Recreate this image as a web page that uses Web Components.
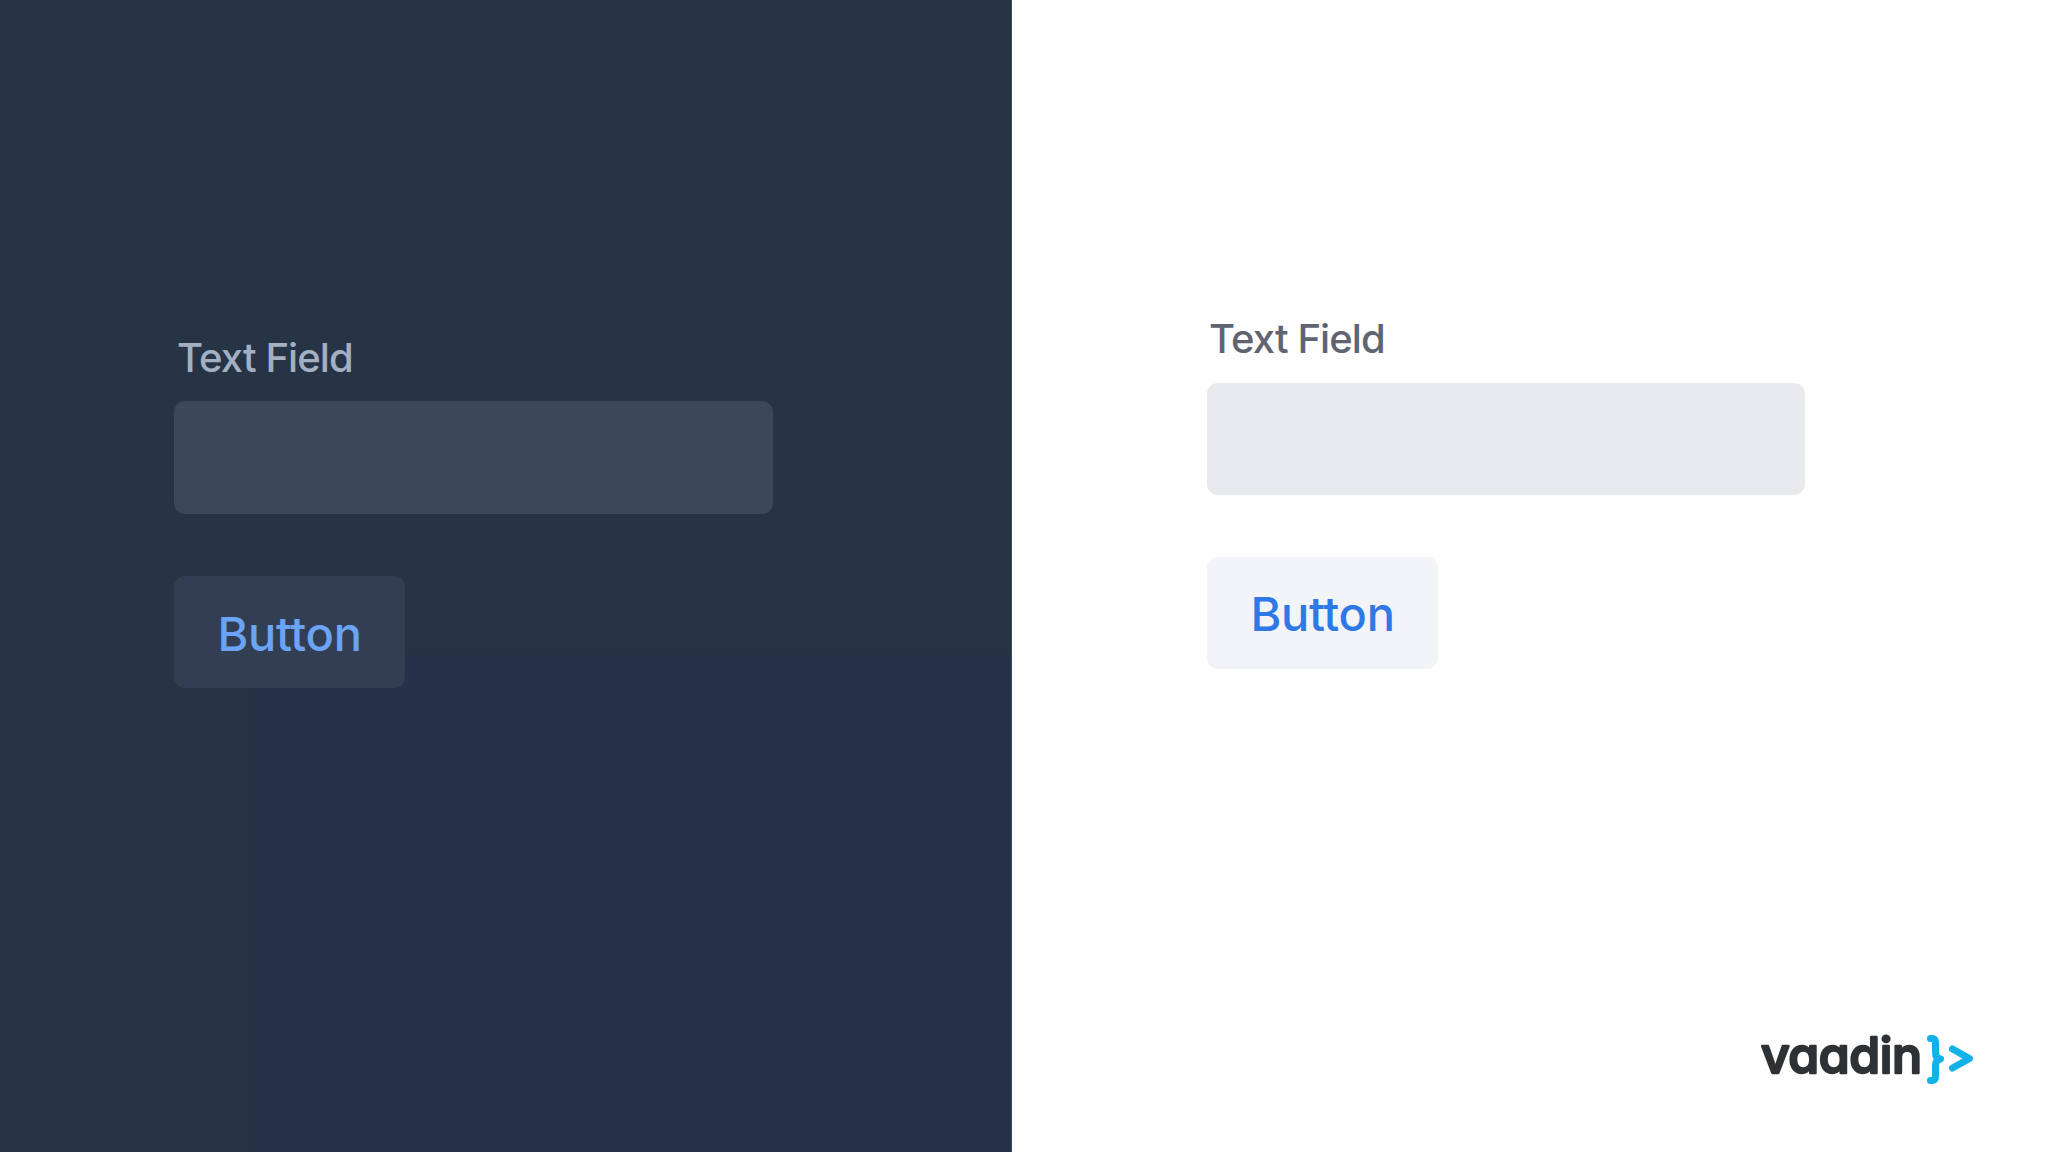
<!DOCTYPE html>
<html lang="en"><head><meta charset="utf-8"><title>Vaadin</title>
<style>
html,body{margin:0;padding:0;width:2048px;height:1152px;overflow:hidden;font-family:Inter,"Liberation Sans",sans-serif}
demo-stage{width:2048px;height:1152px}
</style></head><body>
<template id="t-stage"><style>:host{display:grid;grid-template-columns:1012px 1036px}</style><slot></slot></template>
<template id="t-panel"><style>
:host{display:flex;flex-direction:column;box-sizing:border-box;height:1152px;padding-left:174px;background:var(--bg);padding-top:var(--top)}
:host([theme=dark]){--bg:linear-gradient(#263445 0,#263445 652px,transparent 662px),linear-gradient(to right,#263446 0,#263446 253px,transparent 258px),#26314a;--label:#a3b0c4;--field:#3b4858;--btn:#323f52;--accent:#6ba4f7;--top:335px;--gap:20px;--h:113px;--w:599px;--lx:3px;--bp:3px;border-right:1px solid #3c4a5c}
:host([theme=light]){--bg:#fefefe;--label:#5f6471;--field:#e9eaee;--btn:#f3f4f8;--accent:#2f79e6;--top:316px;--gap:21px;--h:112px;--w:598px;--lx:2px;--bp:1px;padding-left:195px}
</style><slot></slot></template>
<template id="t-field"><style>
:host{display:block;width:var(--w)}
.label{display:block;margin:0 0 0 var(--lx);font:500 40px/46px Inter,"Liberation Sans",sans-serif;letter-spacing:-.9px;color:var(--label);height:46px}
.box{height:var(--h);margin-top:var(--gap);border-radius:11px;background:var(--field)}
</style><span class="label"><slot></slot></span><div class="box"></div></template>
<template id="t-btn"><style>
:host{display:inline-flex;align-self:flex-start;align-items:center;justify-content:center;box-sizing:border-box;width:231px;height:112px;padding-top:var(--bp);margin-top:62px;border-radius:11px;background:var(--btn);color:var(--accent);font:500 47px/1 Inter,"Liberation Sans",sans-serif;letter-spacing:-.3px}
</style><slot></slot></template>
<template id="t-logo"><style>
:host{display:block;align-self:flex-end;margin-top:auto;margin-right:68px;margin-bottom:57px;width:225px;height:70px}
svg{display:block}
text{font:500 50px Inter,"Liberation Sans",sans-serif;font-feature-settings:"cv11";fill:#2f3235;stroke:#2f3235;stroke-width:2.4px;stroke-linejoin:round}
</style><svg width="225" height="70" viewBox="0 0 225 70" role="img" aria-label="vaadin"><text x="6" y="48" textLength="161" lengthAdjust="spacing">vaadin</text>
<path d="M175.500 13.500H177q3.500 0 3.500 4V28q0 5 5 6q-5 1-5 6V51q0 4.500-3.500 4.500H175.500" fill="none" stroke="#13b1e8" stroke-width="7" stroke-linecap="round" stroke-linejoin="round"/>
<path d="M197.500 24L214.500 33.500L197.500 43" fill="none" stroke="#13b1e8" stroke-width="7" stroke-linecap="round" stroke-linejoin="round"/></svg></template>
<demo-stage>
<demo-panel theme="dark"><demo-field>Text Field</demo-field><demo-button>Button</demo-button></demo-panel>
<demo-panel theme="light"><demo-field>Text Field</demo-field><demo-button>Button</demo-button><vaadin-logo></vaadin-logo></demo-panel>
</demo-stage>
<script>
for(const [n,t] of [['demo-stage','t-stage'],['demo-panel','t-panel'],['demo-field','t-field'],['demo-button','t-btn'],['vaadin-logo','t-logo']]){
customElements.define(n,class extends HTMLElement{constructor(){super();this.attachShadow({mode:'open'}).appendChild(document.getElementById(t).content.cloneNode(true))}});
}
</script>
</body></html>
